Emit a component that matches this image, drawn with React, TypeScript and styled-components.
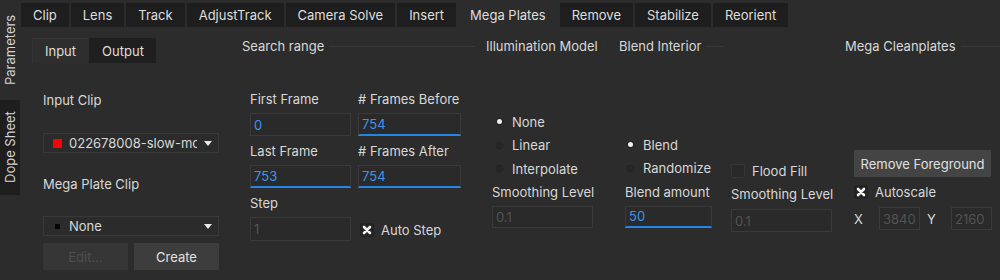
import React from "react";
import styled, { createGlobalStyle } from "styled-components";

const GlobalStyle = createGlobalStyle`
  html, body {
    margin: 0;
    padding: 0;
    background: #2c2c2c;
  }
  body {
    font-family: Inter, "Noto Sans", "Liberation Sans", sans-serif;
    font-size: 13px;
    color: #d8d8d8;
  }
`;

const StyledApp = styled.div`
  width: 1000px;
  height: 280px;
  display: flex;
  overflow: hidden;
  background: #2c2c2c;
`;

const SideBar = styled.div`
  width: 20px;
  flex-shrink: 0;
  padding-top: 3px;
  display: flex;
  flex-direction: column;
  gap: 3px;
`;

const SideTab = styled.div<{ $active?: boolean; $h: number }>`
  height: ${(p) => p.$h}px;
  display: flex;
  align-items: center;
  justify-content: center;
  writing-mode: vertical-rl;
  transform: rotate(180deg);
  background: ${(p) => (p.$active ? "#2c2c2c" : "#1e1e1e")};
  color: #d4d4d4;
  font-size: 13px;
`;

const StyledMain = styled.main`
  flex: 1 1 0;
  display: flex;
  flex-direction: column;
`;

const TabBar = styled.div`
  display: flex;
  padding-top: 3px;
  margin-left: 1px;
  gap: 2px;
`;

const Tab = styled.div<{ $active?: boolean }>`
  height: 24px;
  padding: 0 12px;
  display: flex;
  align-items: center;
  background: ${(p) => (p.$active ? "#2c2c2c" : "#1e1e1e")};
  color: #dedede;
  white-space: nowrap;
`;

const Content = styled.div`
  display: flex;
  padding: 11px 0 0 12px;
`;

const ClipColumn = styled.div`
  width: 198px;
  flex-shrink: 0;
  display: flex;
  flex-direction: column;
`;

const InnerTabs = styled.div`
  display: flex;
  gap: 1px;
  height: 25px;
`;

const InnerTab = styled.div<{ $active?: boolean; $w: number }>`
  width: ${(p) => p.$w}px;
  display: flex;
  align-items: center;
  justify-content: center;
  background: ${(p) => (p.$active ? "#2e2e2e" : "#1f1f1f")};
  border-top: 1px solid ${(p) => (p.$active ? "#343434" : "#1f1f1f")};
  border-left: 1px solid ${(p) => (p.$active ? "#343434" : "#1f1f1f")};
  color: #dedede;
  box-sizing: border-box;
`;

const ClipBody = styled.div`
  padding: 0 11px;
  display: flex;
  flex-direction: column;
`;

const Label = styled.div<{ $mt?: number }>`
  line-height: 16px;
  height: 16px;
  margin-top: ${(p) => p.$mt ?? 0}px;
  white-space: nowrap;
`;

const Dropdown = styled.div<{ $mt?: number }>`
  margin-top: ${(p) => p.$mt ?? 0}px;
  height: 20px;
  border: 1px solid #393939;
  background: #2b2b2b;
  display: flex;
  align-items: center;
  padding: 0 5px 0 9px;
  gap: 7px;
  box-sizing: border-box;
`;

const Swatch = styled.span<{ $color: string; $size: number }>`
  width: ${(p) => p.$size}px;
  height: ${(p) => p.$size}px;
  background: ${(p) => p.$color};
  flex-shrink: 0;
  margin: 0 ${(p) => (9 - p.$size) / 2}px;
`;

const DropText = styled.span`
  flex: 1;
  overflow: hidden;
  white-space: nowrap;
`;

const Caret = styled.span`
  width: 0;
  height: 0;
  border-left: 4px solid transparent;
  border-right: 4px solid transparent;
  border-top: 5px solid #e8e8e8;
  margin-right: 1px;
`;

const ButtonRow = styled.div`
  display: flex;
  gap: 6px;
  margin-top: 7px;
`;

const Button = styled.div<{ $disabled?: boolean; $w?: number; $bg?: string }>`
  width: ${(p) => (p.$w ? `${p.$w}px` : "auto")};
  flex: ${(p) => (p.$w ? "none" : "1")};
  height: 27px;
  display: flex;
  align-items: center;
  justify-content: center;
  background: ${(p) => p.$bg ?? (p.$disabled ? "#363636" : "#3d3d3d")};
  color: ${(p) => (p.$disabled ? "#4e4e4e" : "#e0e0e0")};
  white-space: nowrap;
`;

const GroupBox = styled.div<{ $w: number; $ml: number }>`
  width: ${(p) => p.$w}px;
  margin-left: ${(p) => p.$ml}px;
  flex-shrink: 0;
  display: flex;
  flex-direction: column;
`;

const GroupHeader = styled.div`
  height: 16px;
  display: flex;
  align-items: center;
  gap: 5px;
  white-space: nowrap;
  &::after {
    content: "";
    flex: 1;
    height: 1px;
    background: #383838;
  }
`;

const GroupBody = styled.div<{ $pt: number; $pl: number }>`
  padding-top: ${(p) => p.$pt}px;
  padding-left: ${(p) => p.$pl}px;
  display: flex;
  flex-direction: column;
`;

const FieldGrid = styled.div`
  display: grid;
  grid-template-columns: 101px 103px;
  column-gap: 7px;
  row-gap: 6px;
`;

const Field = styled.div`
  display: flex;
  flex-direction: column;
  gap: 6px;
  margin-bottom: 1px;
`;

const Input = styled.div<{ $active?: boolean; $disabled?: boolean; $w?: number; $h?: number; $mt?: number }>`
  width: ${(p) => (p.$w ? `${p.$w}px` : "100%")};
  height: ${(p) => p.$h ?? 23}px;
  margin-top: ${(p) => p.$mt ?? 0}px;
  box-sizing: border-box;
  border: 1px solid #3a3a3a;
  border-bottom: ${(p) => (p.$active ? "2px solid #2386e6" : "1px solid #3a3a3a")};
  background: #2a2a2a;
  display: flex;
  align-items: center;
  padding: 0 2px 0 3px;
  overflow: hidden;
  color: ${(p) => (p.$disabled ? "#535353" : "#3b95ee")};
`;

const CheckRow = styled.div<{ $h?: number; $mt?: number }>`
  height: ${(p) => p.$h ?? 23.5}px;
  margin-top: ${(p) => p.$mt ?? 0}px;
  display: flex;
  align-items: center;
  gap: 7px;
  white-space: nowrap;
`;

const Radio = styled.span<{ $on?: boolean }>`
  width: 11px;
  height: 11px;
  border-radius: 50%;
  background: #262626;
  border: 1px solid #313131;
  box-sizing: border-box;
  display: flex;
  align-items: center;
  justify-content: center;
  &::after {
    content: "";
    width: 5px;
    height: 5px;
    border-radius: 50%;
    background: ${(p) => (p.$on ? "#f0f0f0" : "transparent")};
  }
`;

const CheckBox = styled.span<{ $on?: boolean }>`
  width: 12px;
  height: 12px;
  border-radius: 2px;
  background: ${(p) => (p.$on ? "#232323" : "#282828")};
  border: 1px solid ${(p) => (p.$on ? "#232323" : "#363636")};
  display: flex;
  align-items: center;
  justify-content: center;
  flex-shrink: 0;
`;

const Check = ({ on }: { on?: boolean }) => (
  <CheckBox $on={on}>
    {on && (
      <svg width="10" height="10" viewBox="0 0 10 10">
        <path d="M2 2 L8 8 M8 2 L2 8" stroke="#f2f2f2" strokeWidth="2.6" strokeLinecap="round" />
      </svg>
    )}
  </CheckBox>
);

const StepCell = styled.div`
  align-self: end;
  height: 24px;
  display: flex;
  align-items: center;
  padding-left: 2px;
`;

const XYRow = styled.div`
  display: flex;
  align-items: center;
  margin-top: 3px;
`;

const XYLabel = styled.span<{ $w: number; $pl?: number }>`
  width: ${(p) => p.$w}px;
  padding-left: ${(p) => p.$pl ?? 0}px;
  box-sizing: border-box;
  flex-shrink: 0;
`;

const tabs = [
  "Clip",
  "Lens",
  "Track",
  "AdjustTrack",
  "Camera Solve",
  "Insert",
  "Mega Plates",
  "Remove",
  "Stabilize",
  "Reorient",
];

function App() {
  return (
    <StyledApp>
      <GlobalStyle />
      <SideBar>
        <SideTab $active $h={94}>Parameters</SideTab>
        <SideTab $h={95}>Dope Sheet</SideTab>
      </SideBar>
      <StyledMain>
        <TabBar>
          {tabs.map((t) => (
            <Tab key={t} $active={t === "Mega Plates"}>
              {t}
            </Tab>
          ))}
        </TabBar>
        <Content>
          <ClipColumn>
            <InnerTabs>
              <InnerTab $active $w={56}>Input</InnerTab>
              <InnerTab $w={67}>Output</InnerTab>
            </InnerTabs>
            <ClipBody>
              <Label $mt={29}>Input Clip</Label>
              <Dropdown $mt={25}>
                <Swatch $color="#ff0000" $size={9} />
                <DropText>022678008-slow-motion</DropText>
                <Caret />
              </Dropdown>
              <Label $mt={23}>Mega Plate Clip</Label>
              <Dropdown $mt={24}>
                <Swatch $color="#050505" $size={5} />
                <DropText>None</DropText>
                <Caret />
              </Dropdown>
              <ButtonRow>
                <Button $disabled>Edit...</Button>
                <Button>Create</Button>
              </ButtonRow>
            </ClipBody>
          </ClipColumn>

          <GroupBox $w={233} $ml={12}>
            <GroupHeader>Search range</GroupHeader>
            <GroupBody $pt={37} $pl={8}>
              <FieldGrid>
                <Field>
                  <Label>First Frame</Label>
                  <Input>0</Input>
                </Field>
                <Field>
                  <Label># Frames Before</Label>
                  <Input $active>754</Input>
                </Field>
                <Field>
                  <Label>Last Frame</Label>
                  <Input $active>753</Input>
                </Field>
                <Field>
                  <Label># Frames After</Label>
                  <Input $active>754</Input>
                </Field>
                <Field>
                  <Label>Step</Label>
                  <Input $disabled $h={24}>1</Input>
                </Field>
                <StepCell>
                  <CheckRow>
                    <Check on />
                    Auto Step
                  </CheckRow>
                </StepCell>
              </FieldGrid>
            </GroupBody>
          </GroupBox>

          <GroupBox $w={118} $ml={11}>
            <GroupHeader>Illumination Model</GroupHeader>
            <GroupBody $pt={56} $pl={8}>
              <CheckRow>
                <Radio $on />
                None
              </CheckRow>
              <CheckRow>
                <Radio />
                Linear
              </CheckRow>
              <CheckRow>
                <Radio />
                Interpolate
              </CheckRow>
            </GroupBody>
            <GroupBody $pt={0} $pl={6}>
              <CheckRow>Smoothing Level</CheckRow>
              <Input $disabled $w={101} $h={22} $mt={2}>
                0.1
              </Input>
            </GroupBody>
          </GroupBox>

          <GroupBox $w={105} $ml={15}>
            <GroupHeader>Blend Interior</GroupHeader>
            <GroupBody $pt={79} $pl={6}>
              <CheckRow>
                <Radio $on />
                Blend
              </CheckRow>
              <CheckRow>
                <Radio />
                Randomize
              </CheckRow>
              <CheckRow>Blend amount</CheckRow>
              <Input $active $w={87} $h={22} $mt={2}>
                50
              </Input>
            </GroupBody>
          </GroupBox>

          <GroupBox $w={104} $ml={7}>
            <GroupBody $pt={121} $pl={0}>
              <CheckRow>
                <Check />
                Flood Fill
              </CheckRow>
              <CheckRow>Smoothing Level</CheckRow>
              <Input $disabled $w={101} $h={23} $mt={3}>
                0.1
              </Input>
            </GroupBody>
          </GroupBox>

          <GroupBox $w={155} $ml={10}>
            <GroupHeader>Mega Cleanplates</GroupHeader>
            <GroupBody $pt={96} $pl={9}>
              <Button $w={137} $bg="#444444">
                Remove Foreground
              </Button>
              <CheckRow $h={24} $mt={3}>
                <Check on />
                Autoscale
              </CheckRow>
              <XYRow>
                <XYLabel $w={25}>X</XYLabel>
                <Input $disabled $w={41} $h={23}>3840</Input>
                <XYLabel $w={31} $pl={7}>Y</XYLabel>
                <Input $disabled $w={41} $h={23}>2160</Input>
              </XYRow>
            </GroupBody>
          </GroupBox>
        </Content>
      </StyledMain>
    </StyledApp>
  );
}

export default App;
